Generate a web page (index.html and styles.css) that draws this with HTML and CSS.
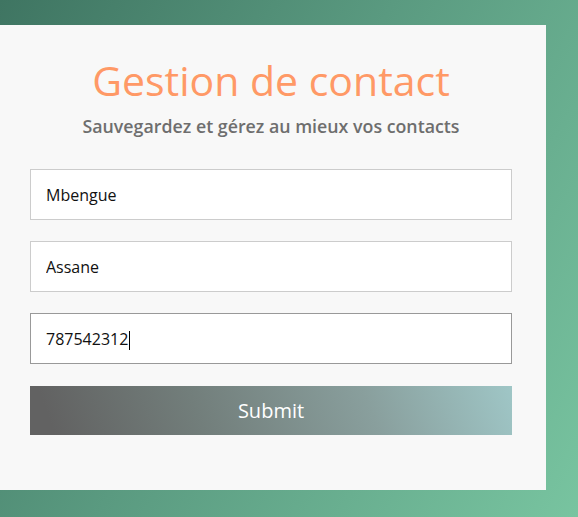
FILE: index.html
```html
<!DOCTYPE html>
<html lang="fr">
<head>
<meta charset="utf-8">
<title>Gestion de contact</title>
<link rel="stylesheet" href="styles.css">
</head>
<body>
<div class="card">
  <h1 class="title">Gestion de contact</h1>
  <p class="subtitle">Sauvegardez et gérez au mieux vos contacts</p>
  <form class="form">
    <input class="field" type="text" value="Mbengue">
    <input class="field" type="text" value="Assane">
    <div class="field-wrap">
      <input class="field field-focus" type="text" value="787542312">
      <span class="caret"></span>
    </div>
    <button class="submit" type="button">Submit</button>
  </form>
</div>
</body>
</html>
```
FILE: styles.css
```css
html, body {
  margin: 0;
  height: 100%;
}
body {
  background: linear-gradient(120deg, #3f7562 0%, #5a9a80 45%, #78c4a0 100%);
  font-family: "Open Sans", sans-serif;
  padding-top: 25px;
  box-sizing: border-box;
  overflow: hidden;
}
.card {
  margin-left: -4px;
  width: 550px;
  height: 465px;
  box-sizing: border-box;
  background: #f8f8f8;
  padding: 0 34px;
  text-align: center;
}
.title {
  margin: 0;
  padding-top: 27px;
  font-size: 41px;
  font-weight: 400;
  line-height: 56px;
  color: #ff9966;
}
.subtitle {
  margin: 6px 0 0;
  font-size: 17.8px;
  font-weight: 600;
  color: #6e6e6e;
  line-height: 24px;
}
.form {
  margin-top: 31px;
  display: flex;
  flex-direction: column;
  gap: 21px;
}
.field-wrap {
  position: relative;
  display: flex;
}
.field {
  display: block;
  width: 100%;
  height: 51px;
  box-sizing: border-box;
  border: 1px solid #cccccc;
  background: #fff;
  padding: 0 15px;
  font-family: "Open Sans", sans-serif;
  font-size: 16px;
  color: #111;
  outline: none;
  margin: 0;
}
.field-focus {
  border-color: #999999;
}
.caret {
  position: absolute;
  left: 99px;
  top: 18px;
  width: 1px;
  height: 19px;
  background: #000;
}
.submit {
  height: 49px;
  border: 0;
  margin: 1px 0 0;
  background: linear-gradient(70deg, #626262 5%, #727e7b 35%, #899f9d 70%, #9fc6c6 100%);
  color: #fff;
  font-family: "Open Sans", sans-serif;
  font-size: 20px;
  cursor: pointer;
}
```
